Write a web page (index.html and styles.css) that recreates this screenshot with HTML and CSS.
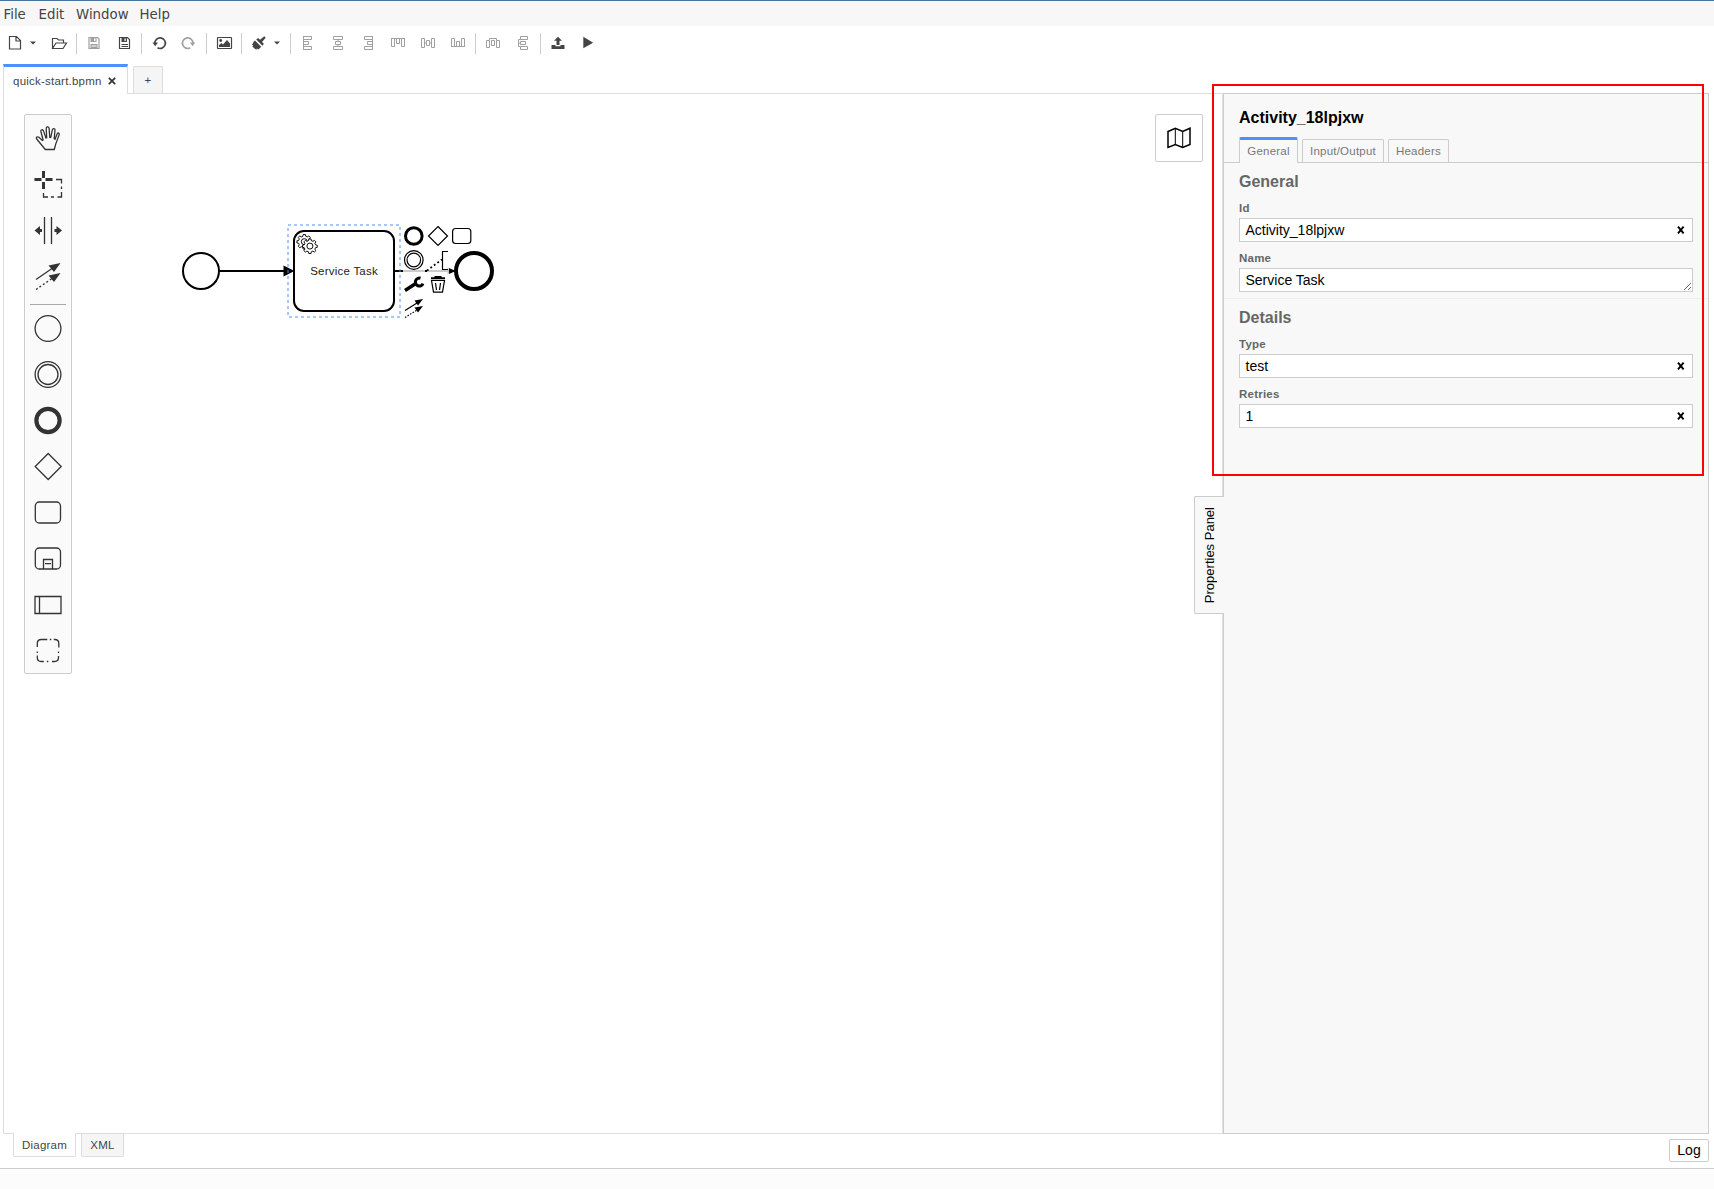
FILE: index.html
```html
<!DOCTYPE html>
<html lang="en">
<head>
<meta charset="utf-8">
<title>quick-start.bpmn</title>
<link rel="stylesheet" href="styles.css">
</head>
<body>
<div class="app">
  <nav class="menubar"><span class="m-file">File</span><span class="m-edit">Edit</span><span class="m-window">Window</span><span>Help</span></nav>

  <div class="toolbar">
    <svg class="tool wide" viewBox="0 26 44 34"><path d="M9.500 36.500h7l4 4v8.500h-11zM16 36.800v4.200h4.500" class="ln"/><path d="M30 41.500h6l-3 3z"/></svg>
    <svg class="tool" viewBox="44 26 30 34"><path d="M52.500 48.500v-10h4.500l1.500 1.500h5v3M52.500 48.500l3.500-5.500h10.500l-3.500 5.500z" class="ln"/></svg>
    <i class="sep"></i>
    <svg class="tool off" viewBox="79 26 30 34"><path d="M89 37.500h8.500l1.500 1.500v9.500h-10z" class="ln"/><path d="M90.500 38h6v4h-6zM90.500 44h7v5h-7z"/><path d="M94 38.500h1.500v2.500h-1.500zM91.500 45.500h5v1h-5z" fill="#fff"/></svg>
    <svg class="tool" viewBox="109 26 30 34"><path d="M119.500 37.500h8l2 2v9h-10z" class="ln"/><path d="M121.500 38h5.500v4h-5.500z"/><path d="M124.500 38.500h1.300v2.500h-1.300z" fill="#fff"/><path d="M121.500 44.500h6.500M121.500 46.500h6.500" class="ln thin"/></svg>
    <i class="sep"></i>
    <svg class="tool" viewBox="144 26 30 34"><path d="M154.800 43.500a5.300 5.300 0 1 1 2.700 4.300" class="ln mid"/><path d="M152.500 42.500h5.500l-2.800 3.700z"/></svg>
    <svg class="tool off" viewBox="174 26 30 34"><path d="M193 43.500a5.300 5.300 0 1 0-2.700 4.300" class="ln mid"/><path d="M195.300 42.500h-5.500l2.800 3.700z"/></svg>
    <i class="sep"></i>
    <svg class="tool" viewBox="209 26 30 34"><rect x="217.500" y="37.500" width="14" height="11" rx=".5" class="ln"/><circle cx="220.700" cy="40.500" r="1.400"/><path d="M219 47v-2l2.500-2 1.500 1.500 4-4.500 3 3.500v3.500z"/></svg>
    <i class="sep"></i>
    <svg class="tool wide" viewBox="244 26 44 34"><path d="M264.300 36.300l1.400 1.400-3.700 4.300 1.900 1.800-1.500 1.900-6.200-6.200 1.900-1.600 1.900 1.900zM255 40.500l6.200 6.200-2.700 2.800-2-1 .3 1.200-1.700-.8-2.800-2.500 1-.8-1.300-.6 1.800-3.500z"/><path d="M274 41.500h6l-3 3z"/></svg>
    <i class="sep"></i>
    <svg class="tool off" viewBox="293 26 30 34"><path d="M303.500 36v14M303.500 36.500h8v3h-8M303.500 41.500h5v3h-5M303.500 46.500h8v3h-8" class="ln thin"/></svg>
    <svg class="tool off" viewBox="323 26 30 34"><path d="M333.500 36.500h9v3h-9zM335.500 41.500h5v3h-5zM333.500 46.500h9v3h-9zM338 39.500v2M338 44.500v2" class="ln thin"/></svg>
    <svg class="tool off" viewBox="353 26 30 34"><path d="M372.500 36v14M372.500 36.500h-8v3h8M372.500 41.500h-5v3h5M372.500 46.500h-8v3h8" class="ln thin"/></svg>
    <svg class="tool off" viewBox="383 26 30 34"><path d="M391 38.500h14M391.500 38.500v8h3v-8M396.500 38.500v5h3v-5M401.500 38.500v8h3v-8" class="ln thin"/></svg>
    <svg class="tool off" viewBox="413 26 30 34"><path d="M421.500 38.500h3v9h-3zM426.500 40.500h3v5h-3zM431.500 38.500h3v9h-3zM424.500 43h2M429.500 43h2" class="ln thin"/></svg>
    <svg class="tool off" viewBox="443 26 30 34"><path d="M451 46.500h14M451.500 46.500v-8h3v8M456.500 46.500v-5h3v5M461.500 46.500v-8h3v8" class="ln thin"/></svg>
    <i class="sep"></i>
    <svg class="tool off" viewBox="478 26 30 34"><path d="M486.500 40.500h3v7h-3zM491.500 40.500h3v5h-3zM496.500 40.500h3v7h-3zM489.500 40.500v-2h7v2" class="ln thin"/></svg>
    <svg class="tool off" viewBox="508 26 30 34"><path d="M520.500 36.500h7v3h-7zM520.500 41.500h5v3h-5zM520.500 46.500h7v3h-7zM520.500 39.500h-2v7h2M518.500 43h2" class="ln thin"/></svg>
    <i class="sep"></i>
    <svg class="tool" viewBox="543 26 30 34"><path d="M558 36.700l4 4h-2.500v4.300h-3v-4.300h-2.500zM551.500 45h4v1.200h5v-1.200h4v4h-13z"/></svg>
    <svg class="tool" viewBox="573 26 30 34"><path d="M583.300 36.700l9.800 6-9.800 5.600z"/></svg>
  </div>

  <div class="tabs">
    <div class="tab active"><span>quick-start.bpmn</span><svg class="close" viewBox="0 0 8 8"><path d="M.8.800l6.400 6.400M7.200.800L.800 7.200"/></svg></div>
    <div class="tab add">+</div>
  </div>

  <main class="frame">
    <section class="canvas">
      <svg class="diagram" viewBox="4 94 1218 1039">
        <g fill="none" stroke="#000" stroke-width="2">
          <path d="M219 271h66M394 271h56"/>
          <circle cx="201" cy="271" r="18" fill="#fff"/>
          <rect x="294" y="231" width="100" height="80" rx="10" fill="#fff"/>
          <circle cx="474" cy="271" r="18" fill="#fff" stroke-width="4"/>
        </g>
        <path d="M283.500 265.500l11 5.500-11 5.500zM447.500 267.500l8.500 3.500-8.500 3.500z"/>
        <g fill="#fff" stroke="#000" stroke-width="1.100">
          <g id="gear" transform="translate(304.300 241) scale(.86)"><path d="M-1.300-7.500h2.600l.4 2 1.800.8 1.700-1.200 1.800 1.800-1.200 1.700.8 1.800 2 .4v2.400l-2 .4-.8 1.700 1.200 1.800-1.800 1.700-1.700-1.200-1.800.8-.4 2h-2.600l-.4-2-1.800-.8-1.700 1.200-1.800-1.700 1.200-1.800-.8-1.700-2-.4v-2.400l2-.4.8-1.800-1.200-1.700 1.800-1.800 1.700 1.200 1.800-.8z"/><circle r="3.500" cy=".8"/></g>
          <use href="#gear" x="5.600" y="4.400"/>
        </g>
        <text x="344.100" y="275" text-anchor="middle" class="label">Service Task</text>
        <rect x="288" y="225" width="112" height="92" class="outline"/>

        <g fill="#fff" fill-opacity=".8">
          <rect x="403" y="225" width="22" height="94"/><rect x="427" y="225" width="22" height="70"/><rect x="451" y="225" width="22" height="22"/>
        </g>
        <g fill="none" stroke="#000" stroke-width="1.200">
          <circle cx="413.800" cy="236" r="8.300" stroke-width="3"/>
          <path d="M438 226.500l9.500 9.500-9.500 9.500-9.500-9.500z"/>
          <rect x="452.600" y="228.500" width="18.200" height="15" rx="3"/>
          <circle cx="413.800" cy="260" r="9.300"/><circle cx="413.800" cy="260" r="6.800"/>
          <path d="M448 251.500h-5.500v18h5.500"/>
          <path d="M427 270.500l15-11" stroke-width="1.800" stroke-dasharray="1.800 2.500"/>
          <path d="M405 290.500l10-6.500" stroke-width="3.500"/>
          <path d="M420.500 278.200a4 4 0 1 0 2.500 5.500" stroke-width="3"/>
          <path d="M431.500 280.500l2 11.700h9l2-11.700zM435.500 283l1 7M440.500 283l-1 7"/><path d="M431 278.300h14M434.500 277h7" stroke-width="2"/>
          <path d="M405 310.500l12-7.500"/><path d="M405 317.500l12-7.500" stroke-dasharray="1.500 1.500"/>
        </g>
        <path d="M423 299l-5 6.500-3.500-5zM423 306l-5 6.500-3.500-5z"/>
      </svg>

      <div class="palette">
        <svg class="entry" viewBox="25 115 46 46"><path d="M45.300 149.500l-8.600-10.500c-1.200-1.800.8-2.800 2.200-1.700l3.400 3.200.8-.5-2.200-8.500c-.4-2 2-2.400 2.600-.6l2.400 7.100.8-.3-.5-9.200c0-2 2.600-2 2.900-.2l.7 9 1 .1 1.600-7.700c.5-1.800 2.900-1.400 2.600.5l-.8 8.500.8.500 2.200-5.400c.7-1.500 2.400-.8 2 .8l-3.500 9.500-1.400 5.400z" class="p"/></svg>
        <svg class="entry" viewBox="25 161 46 46"><path d="M43.500 171v7M43.500 182v7M34.500 179.500h7M45.500 179.500h7" class="p" stroke-width="3"/><path d="M56 179.500h5.500v4M61.500 186.500v2.500M61.500 192v5h-4M54 197h-3M48 197h-4.500v-4" class="p"/></svg>
        <svg class="entry" viewBox="25 207 46 46"><path d="M44.500 217v27M51.500 217v27" class="p"/><path d="M34.500 230.500l5.500-4.500v3h2v3h-2v3zM62 230.500l-5.500-4.500v3h-2v3h2v3z"/></svg>
        <svg class="entry" viewBox="25 253 46 46"><path d="M36 279.500l16-11" class="p"/><path d="M36 289.500l16-11" class="p" stroke-dasharray="2 2.200"/><path d="M60.500 263l-6.500 9-5.500-6.500zM60.500 273l-6.500 9-5.500-6.500z"/></svg>
        <hr>
        <svg class="entry" viewBox="25 305 46 46"><circle cx="48" cy="328.500" r="12.900" class="p"/></svg>
        <svg class="entry" viewBox="25 351 46 46"><circle cx="48" cy="374.500" r="12.900" class="p"/><circle cx="48" cy="374.500" r="10" class="p"/></svg>
        <svg class="entry" viewBox="25 397 46 46"><circle cx="48" cy="420.500" r="11.600" class="p" stroke-width="4.200"/></svg>
        <svg class="entry" viewBox="25 443 46 46"><path d="M48.200 453.500l13 13-13 13-13-13z" class="p"/></svg>
        <svg class="entry" viewBox="25 489 46 46"><rect x="35.300" y="502" width="25.200" height="21" rx="4" class="p"/></svg>
        <svg class="entry" viewBox="25 535 46 46"><rect x="35.300" y="548" width="25.200" height="21" rx="4" class="p"/><path d="M43.500 569v-9.500h9v9.500M45 563.700h6" class="p"/></svg>
        <svg class="entry" viewBox="25 581 46 46"><path d="M35 596.500h26v17h-26zM39.500 596.500v17" class="p"/></svg>
        <svg class="entry" viewBox="25 627 46 46"><path d="M37.300 647v-3.500q0-4 4-4h6M49.800 639.500h1.500M53.800 639.500h1q4 0 4 4v4M58.500 651.500v1.500M58.500 656v1.500q0 4-4 4h-2.500M48.300 661.500h-1.500M43.800 661.500h-2.500q-4 0-4-4v-2M37.300 653v-1.500" class="p"/></svg>
      </div>

      <div class="minimap"><svg viewBox="0 0 24 22"><path d="M1 4.500L8.300 1.200l7.400 3.300L23 1.200V17.500L15.700 20.500 8.300 17.500 1 20.500z" fill="none" stroke="#000" stroke-width="1.500"/><path d="M8.300 1.500v16M15.700 4.500v16" fill="none" stroke="#000"/></svg></div>
      <div class="panel-toggle"><span>Properties Panel</span></div>
    </section>

    <aside class="panel">
      <h1>Activity_18lpjxw</h1>
      <div class="ptabs"><span class="ptab on">General</span><span class="ptab io">Input/Output</span><span class="ptab hd">Headers</span></div>
      <section class="group">
        <h2>General</h2>
        <label>Id</label>
        <div class="field">Activity_18lpjxw<svg class="clear" viewBox="0 0 8 8"><path d="M1 .6l5.600 6.800M6.600.6L1 7.400"/></svg></div>
        <label>Name</label>
        <textarea class="field" spellcheck="false">Service Task</textarea>
      </section>
      <section class="group">
        <h2>Details</h2>
        <label>Type</label>
        <div class="field">test<svg class="clear" viewBox="0 0 8 8"><path d="M1 .6l5.600 6.800M6.600.6L1 7.400"/></svg></div>
        <label>Retries</label>
        <div class="field">1<svg class="clear" viewBox="0 0 8 8"><path d="M1 .6l5.600 6.800M6.600.6L1 7.400"/></svg></div>
      </section>
    </aside>
  </main>

  <div class="bottom">
    <div class="btab on">Diagram</div><div class="btab xml">XML</div>
    <div class="log">Log</div>
  </div>
  <footer class="status"></footer>
  <div class="highlight"></div>
</div>
</body>
</html>
```
FILE: styles.css
```css
* { box-sizing: border-box; }
body { margin: 0; background: #fff; font-family: "Liberation Sans", Arial, sans-serif; font-size: 11.500px; color: #444; }
.app { position: relative; width: 1714px; height: 1189px; display: flex; flex-direction: column; overflow: hidden; }
svg { display: block; }
.tab, .ptabs, .group label, .btab, .label { letter-spacing: .23px; }

.menubar { height: 26px; border-top: 1px solid #4a749b; background: #f7f7f7; display: flex; padding-left: 3.500px; font: 13.33px/27px "DejaVu Sans", sans-serif; }
.m-file { width: 35px; }
.m-edit { width: 37.500px; }
.m-window { width: 63.500px; }

.toolbar { height: 34px; display: flex; align-items: center; }
.tool { width: 30px; height: 34px; fill: #444; stroke: none; flex: none; color: #444; }
.tool.wide { width: 44px; }
.tool.off { fill: #a0a0a0; color: #a0a0a0; }
.ln { fill: none; stroke: currentColor; stroke-width: 1.200; }
.ln.thin { stroke-width: 1; }
.ln.mid { stroke-width: 1.700; }
.sep { width: 1px; height: 21px; margin: 0 2px; background: #ccc; }

.tabs { height: 33px; display: flex; align-items: flex-end; padding-left: 3px; }
.tab.active { position: relative; z-index: 1; width: 125px; height: 30px; margin-bottom: -1px; background: #fff; border: 1px solid #ddd; border-top: 3px solid #4d90ff; border-bottom: 0; padding: 0 11px 0 9px; display: flex; align-items: center; justify-content: space-between; line-height: 26px; }
.close { width: 8px; height: 8px; fill: none; stroke: #333; stroke-width: 1.700; }
.tab.add { width: 30px; height: 27px; margin-left: 5px; border: 1px solid #ddd; border-bottom: 0; border-radius: 2px 2px 0 0; background: #f5f5f5; text-align: center; line-height: 27px; }

.frame { height: 1041px; margin: 0 5px 0 3px; display: flex; border: 1px solid #ddd; border-right: 0; flex: none; }
.canvas { position: relative; width: 1219px; border-right: 1px solid #e2e2e2; flex: none; }
.diagram { width: 1218px; height: 1039px; }
.label { font-size: 11.500px; fill: #222; }
.outline { fill: none; stroke: #4d90ff; stroke-opacity: .5; stroke-width: 2; stroke-dasharray: 3 3; }

.palette { position: absolute; left: 20px; top: 20px; width: 48px; height: 560px; border: 1px solid #ccc; border-radius: 2px; background: #fafafa; }
.entry { width: 46px; height: 46px; fill: #333; }
.p { fill: none; stroke: #333; stroke-width: 1.300; }
.p[stroke-width="3"] { stroke-width: 3; }
.p[stroke-width="4.200"] { stroke-width: 4.200; }
.palette hr { height: 1px; border: 0; margin: 5px 5px 0; background: #aaa; }
.minimap { position: absolute; left: 1151px; top: 20px; width: 48px; height: 48px; border: 1px solid #ccc; border-radius: 2px; background: #fff; display: flex; align-items: center; justify-content: center; }
.minimap svg { width: 24px; height: 22px; }
.panel-toggle { position: absolute; z-index: 2; left: 1190px; top: 402px; width: 30px; height: 118px; border: 1px solid #ccc; border-right: 0; border-radius: 2px 0 0 2px; background: #f8f8f8; display: flex; align-items: center; justify-content: center; color: #000; font-size: 13px; }
.panel-toggle span { writing-mode: vertical-rl; transform: rotate(180deg); line-height: 15px; }

.panel { width: 486px; margin: -1px 0; border: 1px solid #ccc; background: #f8f8f8; flex: none; }
h1 { margin: 14px 0 0 15px; font-size: 16px; line-height: 20px; color: #000; }
h2 { margin: 0; font-size: 16px; line-height: 20px; color: #666; }
.ptabs { height: 35px; display: flex; align-items: flex-end; gap: 4px; padding-left: 15px; border-bottom: 1px solid #ccc; color: #777; line-height: 23px; text-align: center; }
.ptab { height: 23px; border: 1px solid #ccc; border-bottom: 0; border-radius: 2px 2px 0 0; }
.ptab.on { width: 59px; height: 26px; margin-bottom: -1px; border-top: 3px solid #4d90ff; background: #f8f8f8; }
.io { width: 82px; }
.hd { width: 61px; }
.group { height: 136px; padding: 9px 15px 0; border-bottom: 1px solid #eee; }
.group:last-child { border-bottom: 0; }
.group h2 { height: 20px; }
.group label { display: block; height: 14px; margin: 9px 0 3px; font-weight: bold; line-height: 14px; color: #666; }
.field { display: flex; align-items: center; justify-content: space-between; width: 454px; height: 24px; padding: 0 7px 0 5.500px; border: 1px solid #ccc; border-radius: 0; background: #fff; color: #000; font: 14px/22px "Liberation Sans", Arial, sans-serif; }
textarea.field { display: block; margin: 0; overflow: hidden; resize: both; outline: 0; }
.clear { width: 8px; height: 8px; fill: none; stroke: #000; stroke-width: 1.900; }

.bottom { height: 34px; display: flex; align-items: flex-start; padding: 0 5px 0 13px; flex: none; line-height: 22px; text-align: center; }
.btab { width: 43px; height: 23px; border: 1px solid #ddd; border-top: 0; border-radius: 0 0 2px 2px; background: #f5f5f5; }
.btab.on { position: relative; z-index: 1; width: 63px; height: 24px; margin: -1px 5px 0 0; padding-top: 1px; background: #fff; }
.log { width: 40px; height: 23px; margin: 5px 0 0 auto; border: 1px solid #ccc; border-radius: 2px; color: #000; font-size: 14px; line-height: 21px; }
.status { height: 21px; border-top: 1px solid #ccc; background: #fcfcfc; }
.highlight { position: absolute; z-index: 3; left: 1212px; top: 84px; width: 492px; height: 392px; border: 2px solid #f00; }
```
